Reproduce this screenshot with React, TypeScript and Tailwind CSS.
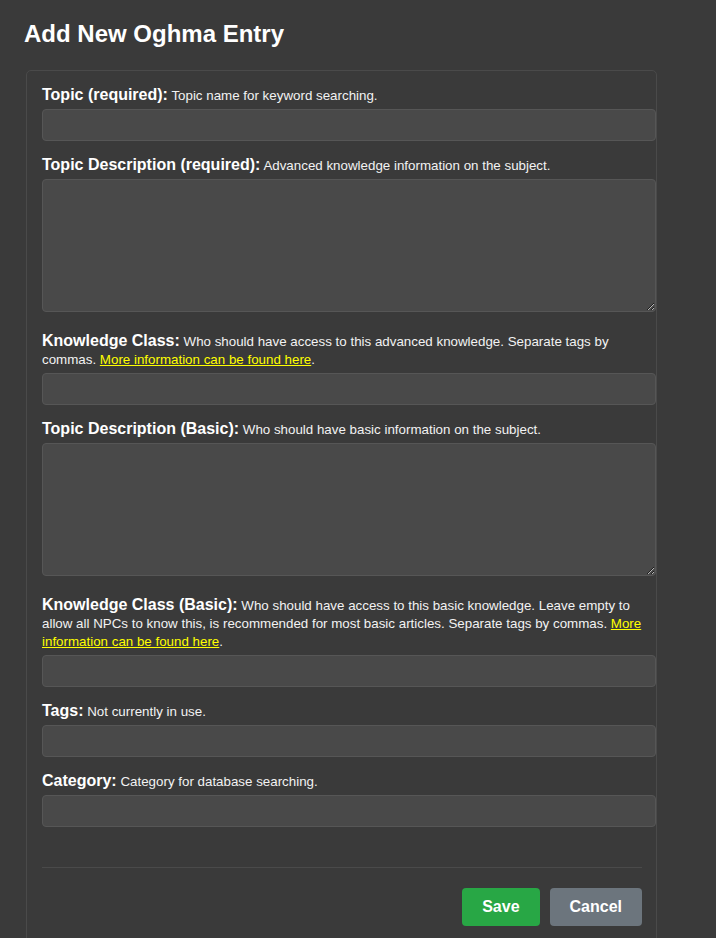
import React from 'react';

interface Field {
  id: string;
  label: string;
  hint: string;
  link?: boolean;
  multiline?: boolean;
}

const fields: Field[] = [
  { id: 'topic', label: 'Topic (required):', hint: 'Topic name for keyword searching.' },
  {
    id: 'topic_desc',
    label: 'Topic Description (required):',
    hint: 'Advanced knowledge information on the subject.',
    multiline: true,
  },
  {
    id: 'knowledge_class',
    label: 'Knowledge Class:',
    hint: 'Who should have access to this advanced knowledge. Separate tags by commas.',
    link: true,
  },
  {
    id: 'topic_desc_basic',
    label: 'Topic Description (Basic):',
    hint: 'Who should have basic information on the subject.',
    multiline: true,
  },
  {
    id: 'knowledge_class_basic',
    label: 'Knowledge Class (Basic):',
    hint: 'Who should have access to this basic knowledge. Leave empty to allow all NPCs to know this, is recommended for most basic articles. Separate tags by commas.',
    link: true,
  },
  { id: 'tags', label: 'Tags:', hint: 'Not currently in use.' },
  { id: 'category', label: 'Category:', hint: 'Category for database searching.' },
];

const controlClass =
  'block w-[614px] bg-[#494949] border border-[#565656] rounded-[4px] text-white text-[14px] px-[8px] outline-none';

export default function App() {
  return (
    <div
      className="min-h-screen bg-[#3a3a3a] px-[24px] pt-[20px] text-white"
      style={{ fontFamily: '"Liberation Sans", Arial, sans-serif' }}
    >
      <h1 className="text-[24px] leading-[27px] font-bold mb-[23px]">Add New Oghma Entry</h1>

      <div className="ml-[2px] w-[631px] border border-[#4a4a4a] rounded-[5px] pt-[15px] px-[15px] pb-[28px]">
        {fields.map((field, i) => (
          <div key={field.id} className={i === fields.length - 1 ? '' : field.multiline ? 'mb-[20px]' : 'mb-[15px]'}>
            <label
              htmlFor={field.id}
              className="block w-[606px] pt-[1px] mb-[4px] text-[13.35px] leading-[18px] text-[#f2f2f2]"
            >
              <span className="text-[16px] leading-[16px] font-bold text-white">{field.label}</span>{' '}
              {field.hint}
              {field.link && (
                <>
                  {' '}
                  <a href="#" className="text-[#ffff00] underline">
                    More information can be found here
                  </a>
                  .
                </>
              )}
            </label>
            {field.multiline ? (
              <textarea id={field.id} className={`${controlClass} h-[133px] py-[6px]`} />
            ) : (
              <input id={field.id} type="text" className={`${controlClass} h-[32px]`} />
            )}
          </div>
        ))}

        {/* Actions */}
        <div className="mt-[40px] border-t border-[#4a4a4a] pt-[20px] flex justify-end gap-[10px] mr-[-1px]">
          <button className="h-[38px] px-[20px] rounded-[4px] bg-[#28a745] text-white text-[16px] font-bold">
            Save
          </button>
          <button className="h-[38px] px-[20px] rounded-[4px] bg-[#6c757d] text-white text-[16px] font-bold">
            Cancel
          </button>
        </div>
      </div>
    </div>
  );
}
